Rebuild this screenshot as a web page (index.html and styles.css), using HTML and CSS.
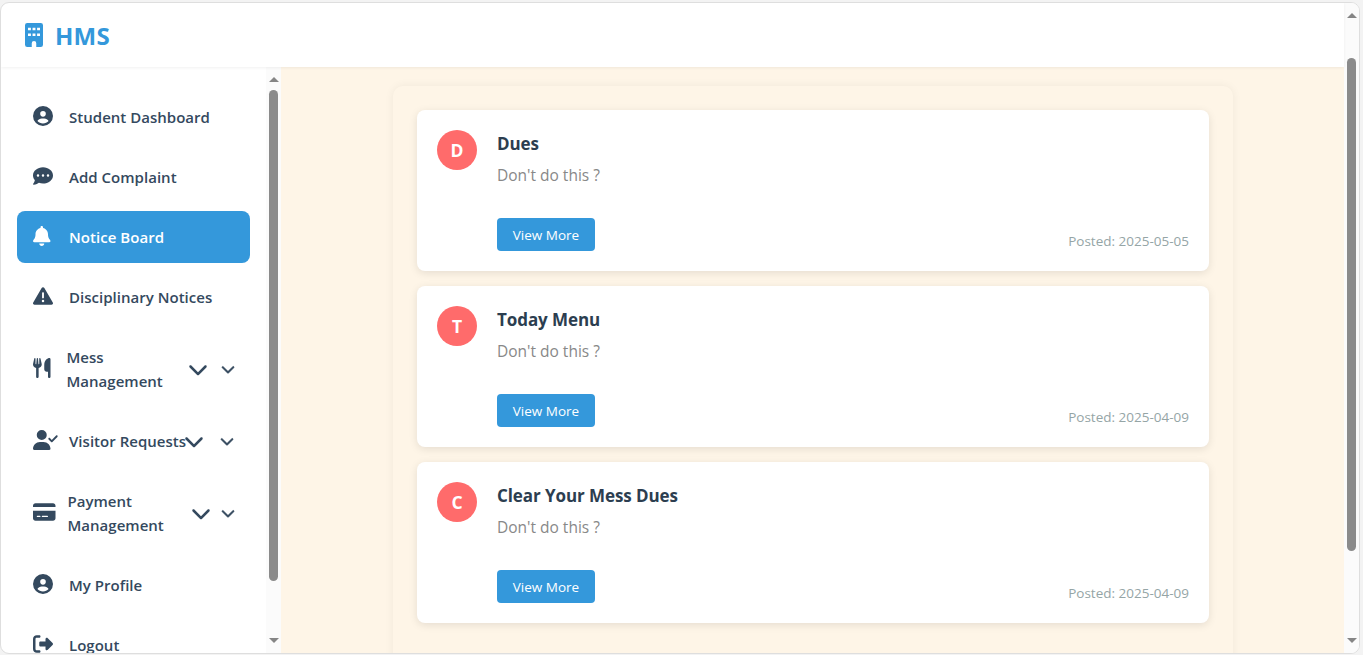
FILE: index.html
```html
<!DOCTYPE html>
<html lang="en">
<head>
<meta charset="utf-8">
<title>HMS - Notice Board</title>
<link rel="stylesheet" href="styles.css">
</head>
<body>
<svg class="defs" aria-hidden="true">
  <symbol id="user" viewBox="0 0 512 512"><path d="M399 384.2C376.900 345.800 335.400 320 288 320H224c-47.400 0-88.900 25.800-111 64.200c35.200 39.200 86.200 63.800 143 63.800s107.800-24.700 143-63.800zM0 256a256 256 0 1 1 512 0A256 256 0 1 1 0 256zm256 16a72 72 0 1 0 0-144 72 72 0 1 0 0 144z"/></symbol>
  <symbol id="chevron" viewBox="0 0 512 512"><path d="M233.400 406.600c12.500 12.500 32.800 12.500 45.300 0l192-192c12.500-12.500 12.500-32.800 0-45.300s-32.800-12.500-45.300 0L256 338.700 86.600 169.400c-12.500-12.500-32.800-12.500-45.300 0s-12.500 32.800 0 45.300l192 192z"/></symbol>
</svg>
<div class="window">
  <div class="page">
    <header class="header">
      <svg class="logo" viewBox="0 0 384 512"><path fill-rule="evenodd" d="M48 0H336a48 48 0 0 1 48 48V464a48 48 0 0 1-48 48H240V432a48 48 0 0 0-96 0v80H48a48 48 0 0 1-48-48V48A48 48 0 0 1 48 0zM64 100v54h62v-54zM161 100v54h62v-54zM258 100v54h62v-54zM64 224v54h62v-54zM161 224v54h62v-54zM258 224v54h62v-54z"/></svg>
      <span class="brand">HMS</span>
    </header>
    <div class="body">
      <aside class="sidebar">
        <nav class="menu">
          <a class="item"><span class="slot"><svg class="icon" viewBox="0 0 512 512"><use href="#user"/></svg></span><span class="label">Student Dashboard</span></a>
          <a class="item"><span class="slot"><svg class="icon" viewBox="0 0 512 512"><path d="M256 448c141.400 0 256-93.100 256-208S397.400 32 256 32S0 125.100 0 240c0 45.100 17.700 86.800 47.700 120.900c-1.900 24.500-11.400 46.300-21.400 62.900c-5.500 9.200-11.100 16.600-15.200 21.600c-2.100 2.500-3.700 4.400-4.900 5.700c-.6 .6-1 1.100-1.300 1.400l-.3 .3c-4.600 4.600-5.900 11.400-3.400 17.400c2.500 6 8.300 9.900 14.800 9.900c28.700 0 57.600-8.900 81.600-19.300c22.900-10 42.400-21.900 54.300-30.600c31.800 11.500 67 17.900 104.100 17.900zM128 208a32 32 0 1 1 0 64 32 32 0 1 1 0-64zm128 0a32 32 0 1 1 0 64 32 32 0 1 1 0-64zm96 32a32 32 0 1 1 64 0 32 32 0 1 1 -64 0z"/></svg></span><span class="label">Add Complaint</span></a>
          <a class="item active"><span class="slot"><svg class="icon narrow" viewBox="0 0 448 512"><path d="M224 0c-17.700 0-32 14.300-32 32V51.200C119 66 64 130.600 64 208v18.800c0 47-17.300 92.400-48.500 127.600l-7.400 8.300c-8.400 9.400-10.400 22.900-5.300 34.400S19.400 416 32 416H416c12.600 0 24-7.400 29.200-18.900s3.100-25-5.300-34.400l-7.400-8.300C401.300 319.200 384 273.900 384 226.800V208c0-77.400-55-142-128-156.800V32c0-17.700-14.300-32-32-32zm45.300 493.300c12-12 18.700-28.300 18.700-45.300H224 160c0 17 6.700 33.300 18.700 45.300s28.300 18.700 45.300 18.700s33.300-6.700 45.300-18.700z"/></svg></span><span class="label">Notice Board</span></a>
          <a class="item"><span class="slot"><svg class="icon" viewBox="0 0 512 512"><path d="M256 32c14.200 0 27.300 7.500 34.500 19.800l216 368c7.300 12.400 7.300 27.700 .2 40.100S486.300 480 472 480H40c-14.300 0-27.600-7.700-34.700-20.100s-7-27.800 .2-40.100l216-368C228.700 39.500 241.800 32 256 32zm0 128c-13.300 0-24 10.700-24 24V296c0 13.300 10.700 24 24 24s24-10.700 24-24V184c0-13.300-10.700-24-24-24zm32 224a32 32 0 1 0 -64 0 32 32 0 1 0 64 0z"/></svg></span><span class="label">Disciplinary Notices</span></a>
          <a class="item tall"><span class="slot mess"><svg class="icon narrow" viewBox="0 0 448 512"><path d="M416 0C400 0 288 32 288 176V288c0 35.300 28.700 64 64 64h32V480c0 17.700 14.300 32 32 32s32-14.300 32-32V352 240 32c0-17.700-14.300-32-32-32zM64 16C64 7.800 57.900 1 49.700 .1S34.200 4.600 32.400 12.500L2.100 148.800C.7 155.100 0 161.500 0 167.900c0 45.900 35.100 83.600 80 87.700V480c0 17.700 14.300 32 32 32s32-14.300 32-32V255.600c44.900-4.100 80-41.800 80-87.700c0-6.400-.7-12.800-2.100-19.100L191.600 12.500c-1.800-8-9.300-13.300-17.400-12.400S160 7.800 160 16V150.200c0 5.400-4.400 9.800-9.800 9.800c-5.100 0-9.300-3.900-9.800-9L127.900 14.600C127.200 6.300 120.300 0 112 0s-15.200 6.300-15.900 14.600L83.700 151c-.5 5.100-4.700 9-9.800 9c-5.400 0-9.800-4.400-9.800-9.800V16z"/></svg></span><span class="label">Mess<br>Management</span><span class="arrows gap-mess"><svg class="icon" viewBox="0 0 512 512"><use href="#chevron"/></svg><svg class="small" viewBox="0 0 512 512"><use href="#chevron"/></svg></span></a>
          <a class="item"><span class="slot"><svg class="icon wide" viewBox="0 0 640 512"><path d="M96 128a128 128 0 1 1 256 0A128 128 0 1 1 96 128zM0 482.300C0 383.800 79.800 304 178.300 304h91.400C368.200 304 448 383.800 448 482.300c0 16.400-13.300 29.700-29.700 29.700H29.700C13.300 512 0 498.700 0 482.300zM625 177L497 305c-9.400 9.400-24.600 9.400-33.900 0l-64-64c-9.400-9.400-9.400-24.600 0-33.900s24.600-9.400 33.900 0l47 47L591 143c9.400-9.400 24.600-9.400 33.900 0s9.400 24.600 0 33.900z"/></svg></span><span class="label">Visitor Requests</span><span class="arrows gap-visitor"><svg class="icon" viewBox="0 0 512 512"><use href="#chevron"/></svg><svg class="small" viewBox="0 0 512 512"><use href="#chevron"/></svg></span></a>
          <a class="item tall"><span class="slot pay"><svg class="icon card-icon" viewBox="0 0 576 512"><path d="M64 32C28.700 32 0 60.700 0 96v32H576V96c0-35.300-28.700-64-64-64H64zM576 224H0V416c0 35.300 28.700 64 64 64H512c35.300 0 64-28.700 64-64V224zM112 352h64c8.800 0 16 7.200 16 16s-7.200 16-16 16H112c-8.800 0-16-7.200-16-16s7.200-16 16-16zm112 16c0-8.800 7.200-16 16-16H368c8.800 0 16 7.200 16 16s-7.200 16-16 16H240c-8.800 0-16-7.200-16-16z"/></svg></span><span class="label">Payment<br>Management</span><span class="arrows gap-pay"><svg class="icon" viewBox="0 0 512 512"><use href="#chevron"/></svg><svg class="small" viewBox="0 0 512 512"><use href="#chevron"/></svg></span></a>
          <a class="item"><span class="slot"><svg class="icon" viewBox="0 0 512 512"><use href="#user"/></svg></span><span class="label">My Profile</span></a>
          <a class="item"><span class="slot"><svg class="icon" viewBox="0 0 512 512"><path d="M377.900 105.900L500.700 228.700c7.200 7.200 11.300 17.100 11.300 27.300s-4.100 20.100-11.300 27.300L377.900 406.100c-6.400 6.400-15 9.900-24 9.900c-18.700 0-33.900-15.200-33.900-33.900l0-62.100-128 0c-17.700 0-32-14.300-32-32l0-64c0-17.700 14.300-32 32-32l128 0 0-62.100c0-18.700 15.200-33.900 33.900-33.900c9 0 17.600 3.600 24 9.900zM160 96L96 96c-17.700 0-32 14.300-32 32l0 256c0 17.700 14.300 32 32 32l64 0c17.700 0 32 14.300 32 32s-14.300 32-32 32l-64 0c-53 0-96-43-96-96L0 128C0 75 43 32 96 32l64 0c17.700 0 32 14.300 32 32s-14.300 32-32 32z"/></svg></span><span class="label">Logout</span></a>
        </nav>
        <div class="scrollbar side-scroll"><i class="up"></i><i class="thumb"></i><i class="down"></i></div>
      </aside>
      <main class="content">
        <section class="board">
          <article class="notice"><div class="avatar">D</div><div class="text"><h3>Dues</h3><p>Don't do this ?</p><button>View More</button></div><time>Posted: 2025-05-05</time></article>
          <article class="notice"><div class="avatar">T</div><div class="text"><h3>Today Menu</h3><p>Don't do this ?</p><button>View More</button></div><time>Posted: 2025-04-09</time></article>
          <article class="notice"><div class="avatar">C</div><div class="text"><h3>Clear Your Mess Dues</h3><p>Don't do this ?</p><button>View More</button></div><time>Posted: 2025-04-09</time></article>
        </section>
      </main>
    </div>
  </div>
  <div class="scrollbar main-scroll"><i class="up"></i><i class="thumb"></i><i class="down"></i></div>
</div>
</body>
</html>
```
FILE: styles.css
```css
* { box-sizing: border-box; }
body {
  margin: 0;
  height: 655px;
  padding: 2px 3px 1px 0;
  overflow: hidden;
  background: #f3f3f3;
  color: #34495e;
  font-family: "Open Sans", "Noto Sans", sans-serif;
}
.defs { display: none; }
svg { display: block; flex: none; fill: currentColor; }
.window {
  display: flex;
  height: 652px;
  border: 1px solid #dedede;
  border-radius: 9px;
  overflow: hidden;
  background: #fff;
}
.page { flex: 1; min-width: 0; display: flex; flex-direction: column; }
.header {
  flex: none;
  height: 64px;
  padding: 0 23.500px;
  display: flex;
  align-items: center;
  gap: 12.500px;
  color: #3498db;
  position: relative;
  box-shadow: 0 1px 3px rgba(0, 0, 0, .06);
}
.logo { width: 18px; height: 24px; }
.brand { font-size: 24px; font-weight: 700; line-height: 32px; padding-top: 1px; letter-spacing: .2px; }
.body { flex: 1; min-height: 0; display: flex; }
.sidebar { flex: none; width: 280px; display: flex; justify-content: space-between; overflow: hidden; }
.menu { width: 249px; padding: 24px 0 0 16px; display: flex; flex-direction: column; gap: 8px; }
.item { flex: none; height: 52px; padding: 0 16px; display: flex; align-items: center; border-radius: 8px; white-space: nowrap; }
.tall { height: 76px; }
.active { background: #3498db; color: #fff; }
.slot { flex: none; width: 36px; padding-bottom: 2px; }
.mess { width: 33.500px; }
.pay { width: 34.500px; }
.icon { width: 20px; height: 20px; }
.narrow { width: 17.500px; }
.wide { width: 25px; }
.card-icon { width: 22.500px; }
.small { width: 14px; height: 14px; stroke: currentColor; stroke-width: 16px; }
.label { flex: none; font-size: 15px; font-weight: 550; line-height: 24px; letter-spacing: .02px; }
.active .label { font-weight: 600; letter-spacing: .05px; }
.arrows { display: flex; align-items: center; margin-left: auto; margin-right: -1px; }
.gap-mess { gap: 13px; }
.gap-visitor { gap: 16px; margin-left: -2px; }
.gap-pay { gap: 10px; }
.scrollbar { flex: none; width: 15px; display: flex; flex-direction: column; align-items: center; background: #fbfbfb; }
.thumb { width: 9px; border-radius: 5px; background: #8b8b8b; }
.up, .down { width: 0; height: 0; border: 5px solid transparent; }
.up { border-top: 0; border-bottom: 5px solid #858585; }
.down { border-bottom: 0; border-top: 5px solid #858585; margin-top: auto; }
.main-scroll { padding: 10px 0; }
.main-scroll .thumb { height: 493px; margin-top: 40px; }
.side-scroll { padding: 10px 0; }
.side-scroll .thumb { height: 491px; margin-top: 8px; }
.content { flex: 1; min-width: 0; background: #fef5e7; padding: 19px 0 0 112px; overflow: hidden; }
.board {
  width: 840px;
  height: 620px;
  padding: 24px;
  display: flex;
  flex-direction: column;
  gap: 15px;
  border-radius: 10px;
  box-shadow: 0 0 10px rgba(0, 0, 0, .06);
}
.notice {
  flex: none;
  height: 161px;
  padding: 20px;
  display: flex;
  gap: 20px;
  border-radius: 8px;
  background: #fff;
  box-shadow: 0 2px 8px rgba(0, 0, 0, .1);
}
.avatar {
  flex: none;
  width: 40px;
  height: 40px;
  display: flex;
  align-items: center;
  justify-content: center;
  border-radius: 50%;
  background: #ff6b6b;
  color: #fff;
  font-size: 17.500px;
  font-weight: 700;
}
.text { flex: 1; display: flex; flex-direction: column; align-items: flex-start; }
h3 { margin: 0; font-size: 17px; font-weight: 700; line-height: 28px; color: #2c3e50; letter-spacing: -.08px; }
p { margin: 5px 0 0; font-size: 15.500px; line-height: 24px; color: #888; }
button {
  width: 98px;
  height: 33px;
  margin-top: auto;
  padding: 0;
  border: 0;
  border-radius: 4px;
  background: #3498db;
  color: #fff;
  font: 13.500px "Open Sans", "Noto Sans", sans-serif;
}
time { align-self: flex-end; font-size: 13.500px; line-height: 20px; color: #95a5a6; }
```
